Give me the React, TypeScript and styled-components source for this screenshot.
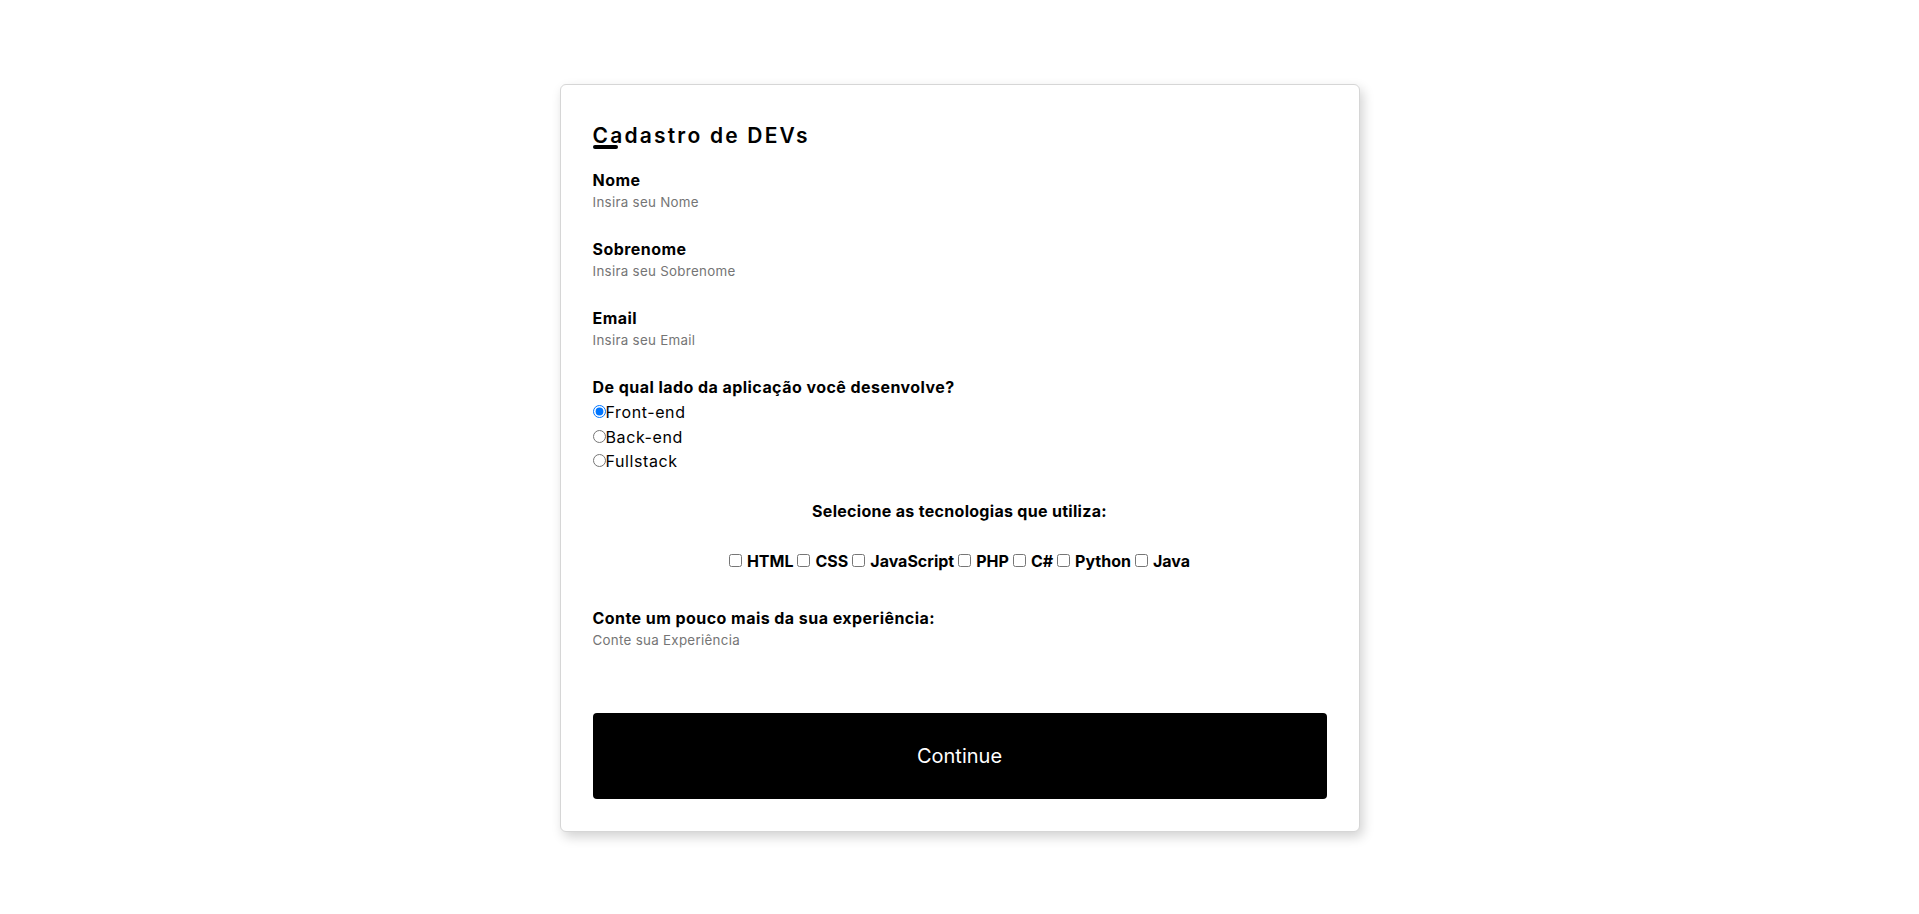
import React from "react";
import styled, { createGlobalStyle } from "styled-components";

const GlobalStyle = createGlobalStyle`
  * { margin: 0; padding: 0; box-sizing: border-box; }
  html, body { background: #ffffff; }
  body {
    font-family: Inter, "Open Sans", "Liberation Sans", Arial, sans-serif;
    color: #000000;
  }
`;

const Page = styled.main`
  min-height: 100vh;
  padding-top: 2px;
  display: flex;
  align-items: center;
  justify-content: center;
`;

const Card = styled.form`
  width: 800px;
  padding: 32px;
  border: 1px solid #d6d6d6;
  border-radius: 6px;
  background: #ffffff;
  box-shadow: 3px 5px 12px rgba(0, 0, 0, 0.18);
  display: flex;
  flex-direction: column;
`;

const Title = styled.h1`
  position: relative;
  margin-top: 2px;
  margin-bottom: 15px;
  font-size: 21px;
  font-weight: 600;
  letter-spacing: 2.2px;
  line-height: 34px;

  &::after {
    content: "";
    position: absolute;
    left: 0;
    top: 25.5px;
    width: 25px;
    height: 4px;
    border-radius: 2px;
    background: #000000;
  }
`;

const Field = styled.div`
  display: flex;
  flex-direction: column;
  margin-bottom: 25px;
`;

const Label = styled.label`
  display: block;
  font-size: 16px;
  font-weight: 700;
  letter-spacing: 0.45px;
  line-height: 24px;
`;

const TextInput = styled.input`
  border: none;
  outline: none;
  width: 100%;
  height: 20px;
  padding: 0;
  font-family: inherit;
  font-size: 13.33px;
  letter-spacing: 0.3px;
  line-height: 20px;
  color: #000000;
  background: transparent;

  &::placeholder {
    color: #757575;
  }
`;

const RadioGroup = styled.div`
  margin-top: 1px;
  display: flex;
  flex-direction: column;
`;

const RadioOption = styled.label`
  display: block;
  font-size: 16px;
  font-weight: 400;
  letter-spacing: 0.6px;
  line-height: 24.5px;

  input {
    margin: 0;
  }
`;

const TechSection = styled.section`
  margin-top: 25px;
  display: flex;
  flex-direction: column;
  align-items: center;
`;

const TechTitle = styled.p`
  font-size: 16px;
  font-weight: 700;
  letter-spacing: 0.3px;
  line-height: 24px;
`;

const TechRow = styled.div`
  margin-top: 26px;
  display: flex;
  align-items: baseline;
  justify-content: center;
  gap: 4px;
`;

const TechOption = styled.label`
  font-size: 16px;
  font-weight: 700;
  line-height: 24px;
  white-space: nowrap;

  input {
    margin: 0 5px 2px 0;
  }
`;

const Experience = styled.div`
  margin-top: 33px;
  display: flex;
  flex-direction: column;
`;

const TextArea = styled.textarea`
  border: none;
  outline: none;
  resize: none;
  width: 100%;
  height: 83px;
  padding: 0;
  font-family: inherit;
  font-size: 13.33px;
  letter-spacing: 0.3px;
  line-height: 20px;
  color: #000000;
  background: transparent;

  &::placeholder {
    color: #757575;
  }
`;

const SubmitButton = styled.button`
  width: 100%;
  height: 86px;
  border: none;
  border-radius: 4px;
  background: #000000;
  color: #ffffff;
  font-family: inherit;
  font-size: 20px;
  font-weight: 400;
  cursor: pointer;
`;

const fields = [
  { id: "nome", label: "Nome", placeholder: "Insira seu Nome" },
  { id: "sobrenome", label: "Sobrenome", placeholder: "Insira seu Sobrenome" },
  { id: "email", label: "Email", placeholder: "Insira seu Email" },
];

const sides = ["Front-end", "Back-end", "Fullstack"];
const techs = ["HTML", "CSS", "JavaScript", "PHP", "C#", "Python", "Java"];

export default function App() {
  return (
    <>
      <GlobalStyle />
      <Page>
        <Card onSubmit={(e) => e.preventDefault()}>
          <Title>Cadastro de DEVs</Title>
          {fields.map((f) => (
            <Field key={f.id}>
              <Label htmlFor={f.id}>{f.label}</Label>
              <TextInput id={f.id} type="text" placeholder={f.placeholder} />
            </Field>
          ))}
          <Label>De qual lado da aplicação você desenvolve?</Label>
          <RadioGroup>
            {sides.map((s, i) => (
              <RadioOption key={s}>
                <input type="radio" name="side" defaultChecked={i === 0} />
                {s}
              </RadioOption>
            ))}
          </RadioGroup>
          <TechSection>
            <TechTitle>Selecione as tecnologias que utiliza:</TechTitle>
            <TechRow>
              {techs.map((t) => (
                <TechOption key={t}>
                  <input type="checkbox" />
                  {t}
                </TechOption>
              ))}
            </TechRow>
          </TechSection>
          <Experience>
            <Label htmlFor="exp">Conte um pouco mais da sua experiência:</Label>
            <TextArea id="exp" placeholder="Conte sua Experiência" />
          </Experience>
          <SubmitButton type="submit">Continue</SubmitButton>
        </Card>
      </Page>
    </>
  );
}
